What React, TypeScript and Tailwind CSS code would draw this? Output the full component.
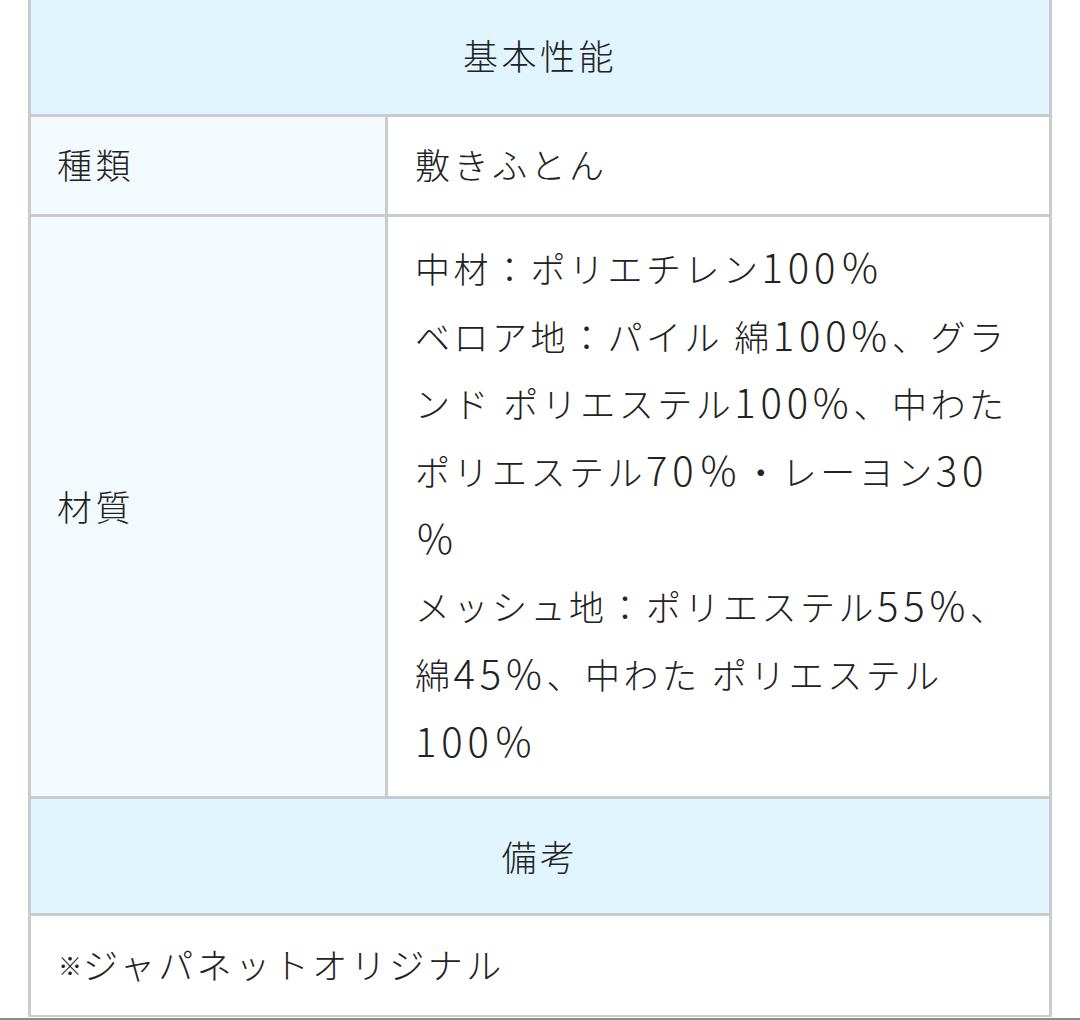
import React from "react";

const font = {
  fontFamily: '"Noto Sans CJK JP", "Noto Sans", sans-serif',
};

function T({ s }: { s: string }) {
  const parts = s.split(/([0-9%％]+)/);
  return (
    <>
      {parts.map((p, i) =>
        /^[0-9%％]+$/.test(p) ? (
          <span key={i} className="text-[40px] leading-none font-light tracking-[0.12em]">
            {p}
          </span>
        ) : (
          <React.Fragment key={i}>{p}</React.Fragment>
        )
      )}
    </>
  );
}

export default function App() {
  const lines = [
    "中材：ポリエチレン100％",
    "ベロア地：パイル 綿100%、グラ",
    "ンド ポリエステル100%、中わた",
    "ポリエステル70％・レーヨン30",
    "％",
    "メッシュ地：ポリエステル55%、",
    "綿45%、中わた ポリエステル",
    "100％",
  ];
  return (
    <div
      className="w-[1080px] h-[1020px] bg-white flex flex-col text-[#222222] text-[35px] font-light tracking-[0.1em] overflow-hidden"
      style={font}
    >
      <div className="ml-[28px] w-[1024px] border-x-[3px] border-b-[2px] border-[#c9cbce] flex flex-col">
        <div className="h-[117px] bg-[#e1f5fe] border-b-[3px] border-[#c9cbce] flex items-center justify-center pb-[3px]">
          基本性能
        </div>
        <div className="grid grid-cols-[357px_1fr] h-[100px] border-b-[3px] border-[#c9cbce]">
          <div className="bg-[#f3fafe] border-r-[3px] border-[#c9cbce] flex items-center pl-[26px] pb-[3px]">
            種類
          </div>
          <div className="flex items-center pl-[27px] pb-[3px]">敷きふとん</div>
        </div>
        <div className="grid grid-cols-[357px_1fr] h-[582px] border-b-[3px] border-[#c9cbce]">
          <div className="bg-[#f3fafe] border-r-[3px] border-[#c9cbce] flex items-center pl-[26px]">
            材質
          </div>
          <div className="pl-[27px] pt-[17px] leading-[67.7px]">
            {lines.map((l, i) => (
              <div key={i} className="whitespace-nowrap h-[67.7px]">
                <T s={l} />
              </div>
            ))}
          </div>
        </div>
        <div className="h-[117px] bg-[#e1f5fe] border-b-[3px] border-[#c9cbce] flex items-center justify-center">
          備考
        </div>
        <div className="h-[99px] flex items-center pl-[27px] pb-[2px]">
          <span className="text-[24px] tracking-normal mr-[1px]">※</span>
          ジャパネットオリジナル
        </div>
      </div>
      <div className="h-[1px]"></div>
      <div className="h-[2px] w-full bg-[#8a8a8a]"></div>
    </div>
  );
}
